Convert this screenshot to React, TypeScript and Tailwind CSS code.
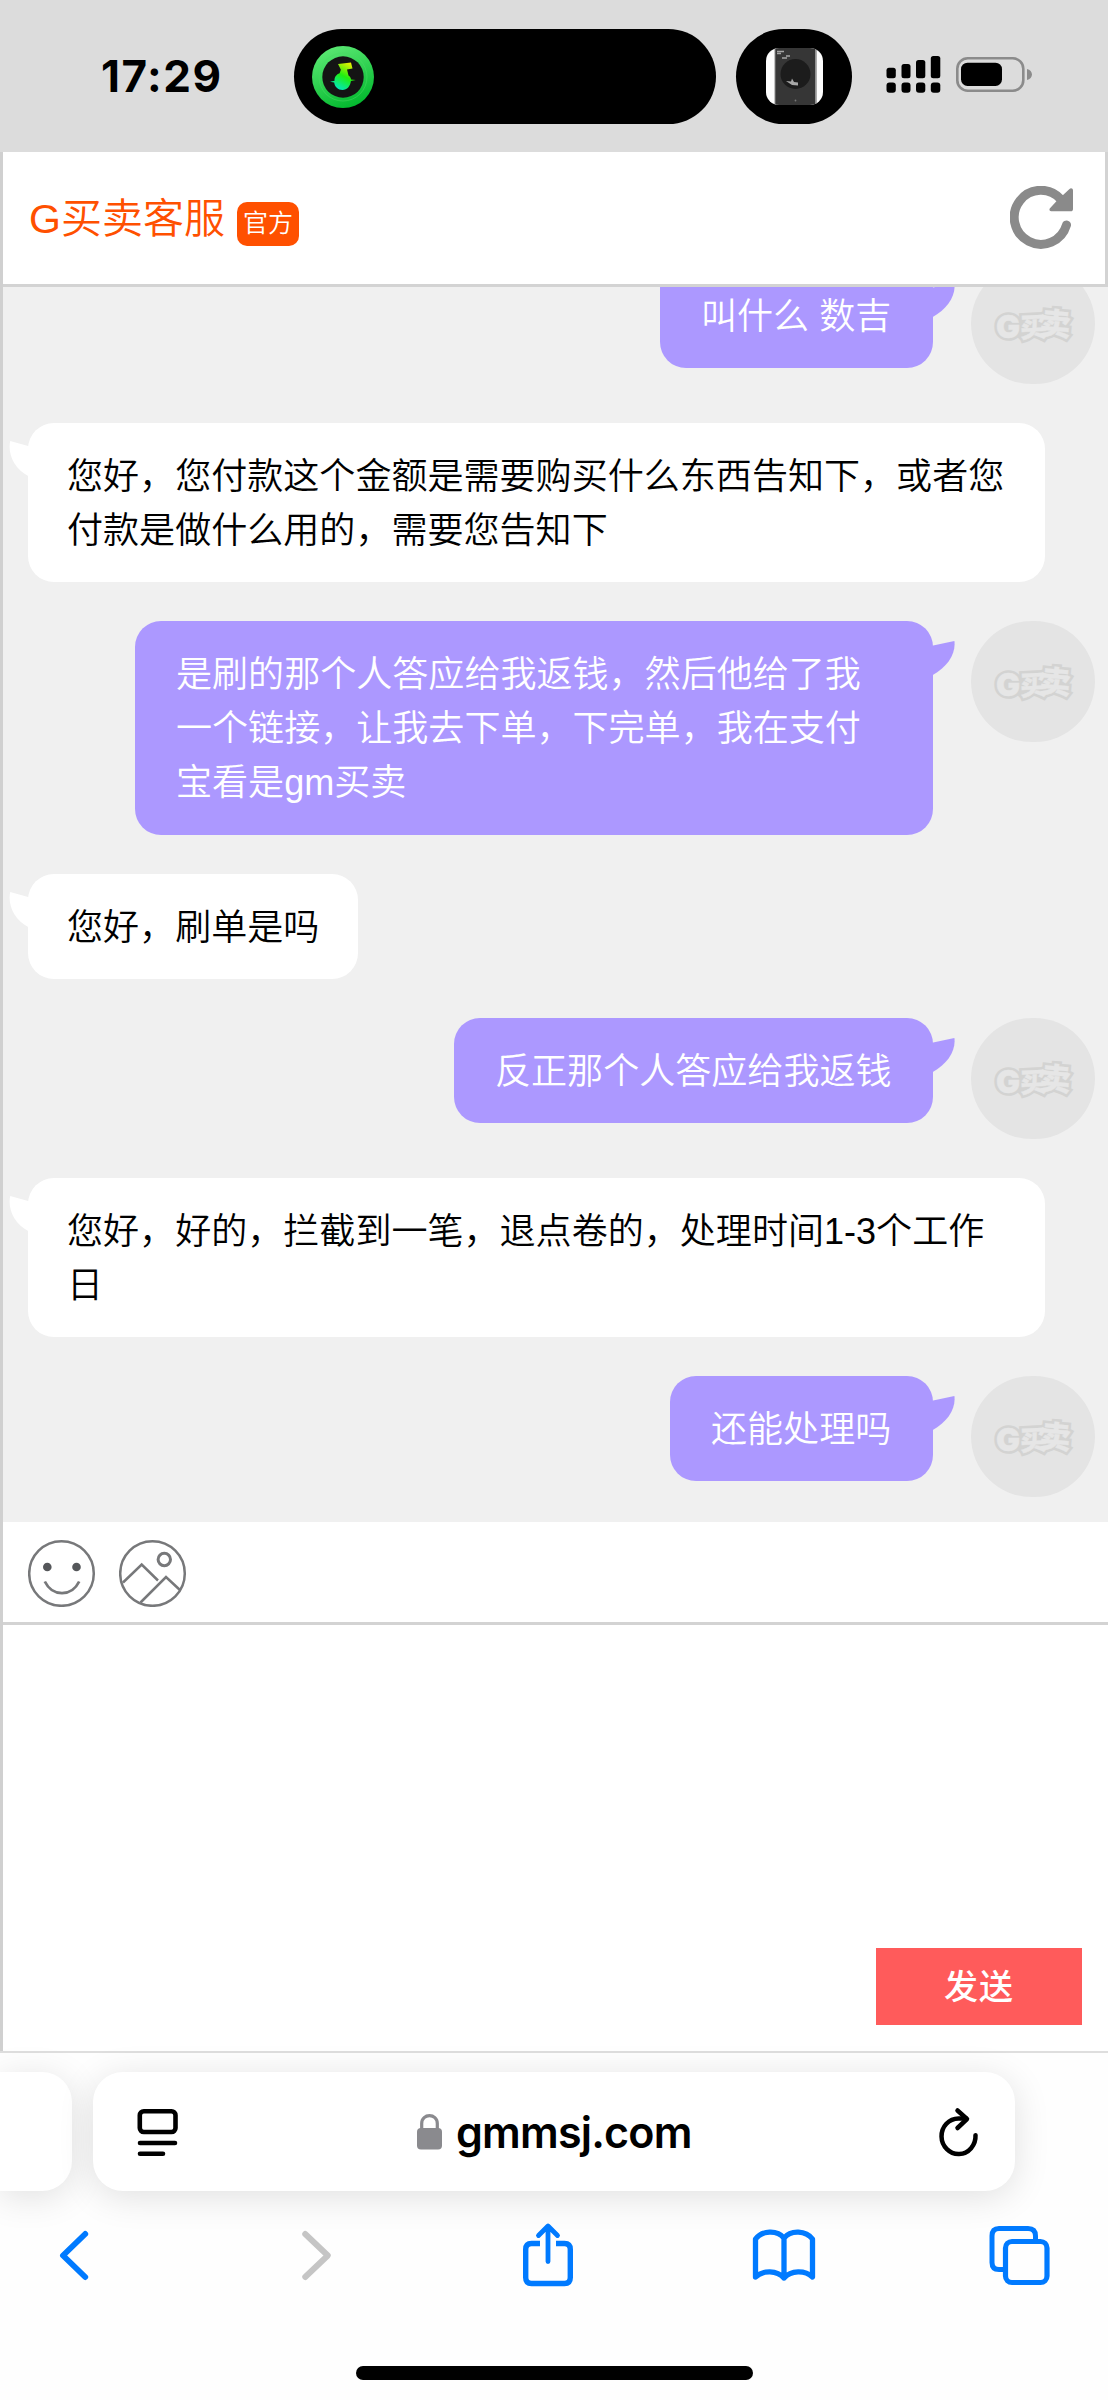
import type { ReactNode } from "react";

type Message = { from: "agent" | "me"; lines: string[]; size: string };

const messages: Message[] = [
  { from: "me", lines: ["叫什么 数吉"], size: "w-[273px] h-[105px]" },
  {
    from: "agent",
    lines: ["您好，您付款这个金额是需要购买什么东西告知下，或者您", "付款是做什么用的，需要您告知下"],
    size: "w-[1017px] h-[159px]",
  },
  {
    from: "me",
    lines: ["是刷的那个人答应给我返钱，然后他给了我", "一个链接，让我去下单，下完单，我在支付", "宝看是gm买卖"],
    size: "w-[798px] h-[214px]",
  },
  { from: "agent", lines: ["您好，刷单是吗"], size: "w-[330px] h-[105px]" },
  { from: "me", lines: ["反正那个人答应给我返钱"], size: "w-[479px] h-[105px]" },
  {
    from: "agent",
    lines: ["您好，好的，拦截到一笔，退点卷的，处理时间1-3个工作", "日"],
    size: "w-[1017px] h-[159px]",
  },
  { from: "me", lines: ["还能处理吗"], size: "w-[263px] h-[105px]" },
];

function MusicIcon() {
  return (
    <svg width="62" height="62" viewBox="0 0 62 62">
      <defs>
        <linearGradient id="ring" x1="0.3" y1="0" x2="0.7" y2="1">
          <stop offset="0" stopColor="#5be873" />
          <stop offset="1" stopColor="#00b72c" />
        </linearGradient>
        <linearGradient id="note" x1="0.8" y1="0" x2="0.3" y2="1">
          <stop offset="0" stopColor="#f5ee00" />
          <stop offset="0.5" stopColor="#1fee10" />
          <stop offset="1" stopColor="#00e8c8" />
        </linearGradient>
      </defs>
      <circle cx="31" cy="31" r="31" fill="url(#ring)" />
      <circle cx="31" cy="31" r="24" fill="none" stroke="#49d963" strokeWidth="1" opacity="0.5" />
      <circle cx="31" cy="31" r="20.7" fill="#141414" />
      <path
        d="M26 18l13-1.500 1.500 6-5.500 1 1.500 6c1.500 1 2.300 2.300 2.600 4l4.600.5-4.800 1c-.5 5-3.800 9-8.400 9-4.500 0-7.900-3.200-8.300-7.500l-4.200-.8 4.600-1c-.5-3.500 2-6.500 5-7.500l1.300-3.500z"
        fill="url(#note)"
      />
    </svg>
  );
}

function SpeakerThumb() {
  return (
    <svg width="57" height="57" viewBox="0 0 57 57">
      <defs>
        <clipPath id="thumb">
          <rect width="57" height="57" rx="13" />
        </clipPath>
      </defs>
      <g clipPath="url(#thumb)">
        <rect width="57" height="57" fill="#fdfdfd" />
        <rect x="8.500" width="1.500" height="57" fill="#8b8b8b" />
        <rect x="9.500" width="40" height="57" fill="#363636" />
        <rect x="49.500" width="1.200" height="57" fill="#8b8b8b" />
        <path d="M11 3.500h7M11 5.500h4M16 10h5M20 8h4" stroke="#a5a5a5" strokeWidth="1.300" />
        <circle cx="29.500" cy="26" r="15" fill="#1c1c1c" />
        <path d="M20 33l5 .5 1-3 2 3.500 4 .5v3l-6-.5z" fill="#a8a8a8" />
        <circle cx="29.500" cy="52.500" r="0.900" fill="#777" />
      </g>
    </svg>
  );
}

function StatusBar() {
  return (
    <header className="flex h-[152px] shrink-0 items-start bg-[#dcdcdc] pt-[29px]">
      <div className="ml-[101px] flex h-[95px] w-[193px] items-center pb-[1px] font-['Inter'] text-[44px] font-bold tracking-[1.500px] text-black">
        17:29
      </div>
      <div className="flex h-[95px] w-[422px] items-center rounded-full bg-black pl-[18px]">
        <MusicIcon />
      </div>
      <div className="ml-[20px] flex h-[95px] w-[116px] items-center justify-center rounded-[48px] bg-black">
        <SpeakerThumb />
      </div>
      <svg className="mt-[27px] ml-[34px]" width="55" height="37" viewBox="0 0 55 37">
        <rect x="0.500" y="11.700" width="9.300" height="10.500" rx="2.500" />
        <rect x="15.500" y="8" width="9" height="14.200" rx="2.500" />
        <rect x="30" y="4" width="9.300" height="18.200" rx="2.500" />
        <rect x="44.800" y="0" width="9.500" height="22.200" rx="2.500" />
        <rect x="0.500" y="26.500" width="9.300" height="10.200" rx="3" />
        <rect x="15.500" y="26.500" width="9" height="10.200" rx="3" />
        <rect x="30" y="26.500" width="9.300" height="10.200" rx="3" />
        <rect x="44.800" y="26.500" width="9.500" height="10.200" rx="3" />
      </svg>
      <svg className="mt-[28px] ml-[15px]" width="77" height="35" viewBox="0 0 77 35">
        <rect x="1.300" y="1.300" width="66" height="32.400" rx="10.500" fill="none" stroke="#8b8b8b" strokeWidth="2.600" />
        <rect x="5" y="5.700" width="41" height="23.300" rx="6.500" />
        <path d="M71 12c3 .8 5 3 5 5.500s-2 4.700-5 5.500z" fill="#8b8b8b" />
      </svg>
    </header>
  );
}

function TitleBar() {
  return (
    <div className="flex h-[135px] shrink-0 items-center border-r-[3px] border-b-[3px] border-[#d3d3d3] bg-white pr-[31px] pl-[26px]">
      <h1 className="pt-[2px] text-[41px] leading-[60px] font-[350] text-[#ff5000]">G买卖客服</h1>
      <span className="mt-[11px] ml-[12px] flex h-[44px] w-[62px] items-center justify-center rounded-[10px] bg-[#ff5000] pt-[1px] text-[25px] font-[350] text-white">
        官方
      </span>
      <svg className="ml-auto" width="64" height="64" viewBox="0 0 64 64">
        <path d="M56.500 39A26.700 27 0 1 1 51 13.500" fill="none" stroke="#8a8a8a" strokeWidth="9" strokeLinecap="round" />
        <path d="M52.500 9.500l7-6.500c1.500-1.300 3.500-.5 3.500 1.500V23c0 1.500-.8 2.300-2.300 2.300H42c-2.500 0-3.300-1.800-1.800-3.300l6-6.500z" fill="#8a8a8a" />
      </svg>
    </div>
  );
}

function LogoText() {
  return (
    <>
      <text x="7" y="44" fontSize="32" fontFamily="Inter, sans-serif">G</text>
      <text x="31" y="43" fontSize="27" transform="rotate(-3 44 34)">买</text>
      <text x="51" y="41" fontSize="31" transform="rotate(5 66 30)">卖</text>
    </>
  );
}

function Avatar() {
  return (
    <div className="ml-[38px] flex h-[121px] w-[124px] shrink-0 items-center justify-center rounded-full bg-[#e4e4e4]">
      <svg className="-mt-[4px]" width="88" height="56" viewBox="0 0 88 56" fontFamily="'Noto Sans CJK SC', sans-serif" fontWeight="900">
        <g fill="#d3d3d2" stroke="#d3d3d2" strokeWidth="5.500" strokeLinejoin="miter">
          <LogoText />
        </g>
        <g fill="#e6e6e6" stroke="#e6e6e6" strokeWidth="0.300">
          <LogoText />
        </g>
      </svg>
    </div>
  );
}

function MessageRow({ message }: { message: Message }) {
  const text = message.lines.map((line) => (
    <p key={line} className="leading-[54px] whitespace-pre">
      {line}
    </p>
  ));
  if (message.from === "agent") {
    return (
      <div className="flex pl-[25px]">
        <div className={`relative rounded-[26px] bg-white pt-[27px] pl-[39px] text-black ${message.size}`}>
          <svg className="absolute top-[18px] -left-[19px]" width="20" height="36" viewBox="0 0 20 36">
            <path d="M20 5.200L1.200 0C-1.500 13 5 28 20 35.500z" fill="#fff" />
          </svg>
          {text}
        </div>
      </div>
    );
  }
  return (
    <div className="flex justify-end pr-[13px]">
      <div className={`relative rounded-[26px] bg-[#ac98ff] pt-[27px] pl-[41px] text-white ${message.size}`}>
        <svg className="absolute top-[20px] -right-[22px]" width="23" height="35" viewBox="0 0 23 35">
          <path d="M0 4.700L22.400 0C24 12.500 16 25.500 0 34.500z" fill="#ac98ff" />
        </svg>
        {text}
      </div>
      <Avatar />
    </div>
  );
}

function Composer() {
  return (
    <>
      <div className="flex h-[103px] shrink-0 gap-[23px] border-b-[3px] border-[#d3d3d3] bg-white pt-[17px] pl-[25px]">
        <svg width="68" height="68" viewBox="0 0 68 68" fill="none" stroke="#77787a" strokeWidth="2.500">
          <circle cx="33.500" cy="34.500" r="32.300" />
          <circle cx="19.300" cy="28" r="4.300" fill="#55575a" stroke="none" />
          <circle cx="48.500" cy="28" r="4.300" fill="#55575a" stroke="none" />
          <path d="M16.800 42.500c7.700 15.500 26.700 15.500 34.400 0" strokeWidth="2.800" />
        </svg>
        <svg width="68" height="68" viewBox="0 0 68 68" fill="none" stroke="#77787a" strokeWidth="2.500">
          <circle cx="33.500" cy="34.500" r="32.300" />
          <circle cx="45.300" cy="20.500" r="6.200" strokeWidth="3" />
          <path d="M4 43.500L22.700 25.500L39 41.500M21.500 63.500L47 38L61.500 51.500" />
        </svg>
      </div>
      <div className="flex h-[426px] shrink-0 items-end justify-end bg-white pr-[26px] pb-[26px]">
        <button className="h-[77px] w-[206px] bg-[#ff5b5b] pt-[2px] text-[34px] font-medium tracking-[1px] text-white">发送</button>
      </div>
    </>
  );
}

function NavIcon({ width, className, children }: { width: number; className: string; children: ReactNode }) {
  return (
    <svg
      className={className}
      width={width}
      height="70"
      viewBox={`0 0 ${width} 70`}
      fill="none"
      stroke="#007aff"
      strokeWidth="5.900"
      strokeLinecap="round"
      strokeLinejoin="round"
    >
      {children}
    </svg>
  );
}

function BrowserBar() {
  return (
    <footer className="relative h-[349px] shrink-0 border-t-2 border-[#dedede] bg-[#fefefe] pt-[19px] font-['Inter']">
      <div className="flex gap-[21px]">
        <div className="h-[119px] w-[72px] rounded-r-[30px] bg-white shadow-[0_6px_36px_rgba(0,0,0,0.12)]" />
        <div className="flex h-[119px] w-[922px] items-center rounded-[30px] bg-white shadow-[0_6px_36px_rgba(0,0,0,0.12)]">
          <svg className="ml-[44px]" width="42" height="50" viewBox="0 0 42 50" fill="none" stroke="#000" strokeWidth="4.600" strokeLinecap="round">
            <rect x="2.800" y="4.300" width="35.700" height="20.700" rx="4" />
            <path d="M3 36h35M3 46.800h23" />
          </svg>
          <svg className="ml-[238px]" width="25" height="36" viewBox="0 0 25 36">
            <rect y="14" width="25" height="21.500" rx="4" fill="#8a8a8e" />
            <path d="M4.700 16V9.500C4.700 -1 20.300 -1 20.300 9.500V16" fill="none" stroke="#8a8a8e" strokeWidth="3.200" />
          </svg>
          <span className="ml-[14px] w-[237px] pt-[1px] text-[43px] font-semibold tracking-[-0.8px] text-black">gmmsj.com</span>
          <svg className="ml-[245px]" width="42" height="50" viewBox="0 0 42 50" fill="none" stroke="#000" strokeWidth="4.500" strokeLinecap="round" strokeLinejoin="round">
            <path d="M37.500 28.200A17 17.800 0 1 1 20.500 11.400H28" />
            <path d="M19.500 3.500L29 12L19.500 21" />
          </svg>
        </div>
      </div>
      <nav className="flex pt-[29px]">
        <NavIcon width={34} className="ml-[57px]">
          <path d="M28.200 14L6 35.500L28.200 57" />
        </NavIcon>
        <NavIcon width={34} className="ml-[208px]">
          <path d="M6.200 14L28.800 35.500L6.200 57" stroke="#c5c5c5" />
        </NavIcon>
        <NavIcon width={54} className="ml-[188px]">
          <path d="M19 23.500H10.500Q4.700 23.500 4.700 29.500V57.500Q4.700 63.500 10.500 63.500H43.500Q49.300 63.500 49.300 57.500V29.500Q49.300 23.500 43.500 23.500H35" strokeWidth="5.400" strokeLinecap="butt" />
          <path d="M27 41.500V6.500M17.500 15.500L27 6L36.500 15.500" strokeWidth="4.800" />
        </NavIcon>
        <NavIcon width={68} className="ml-[175px]">
          <path d="M34 18C27 9.500 12 10.500 5.500 19V57C13 50 27 50 34 58C41 50 55 50 62.500 57V19C56 10.500 41 9.500 34 18V58" strokeWidth="5.300" />
        </NavIcon>
        <NavIcon width={66} className="ml-[169px]">
          <path d="M18 49.500H12Q5 49.500 5 42.500V16Q5 8.500 12 8.500H41Q48.500 8.500 48.500 16V22" strokeWidth="5" strokeLinecap="butt" />
          <rect x="18.500" y="21.500" width="41.500" height="41" rx="6.500" strokeWidth="5.200" />
        </NavIcon>
      </nav>
      <div className="mx-auto mt-[76px] h-[14px] w-[397px] rounded-full bg-black" />
    </footer>
  );
}

export default function App() {
  return (
    <div className="flex h-[2400px] w-[1108px] flex-col overflow-hidden bg-white font-['Liberation_Sans','Noto_Sans_CJK_SC',sans-serif]">
      <StatusBar />
      <main className="flex h-[1899px] shrink-0 flex-col border-l-[3px] border-[#d0d0d0]">
        <TitleBar />
        <section className="flex h-[1235px] shrink-0 flex-col justify-end gap-[39px] overflow-hidden bg-[#f0f0f0] pb-[25px] text-[36.05px] font-[350]">
          {messages.map((message) => (
            <MessageRow key={message.lines[0]} message={message} />
          ))}
        </section>
        <Composer />
      </main>
      <BrowserBar />
    </div>
  );
}
